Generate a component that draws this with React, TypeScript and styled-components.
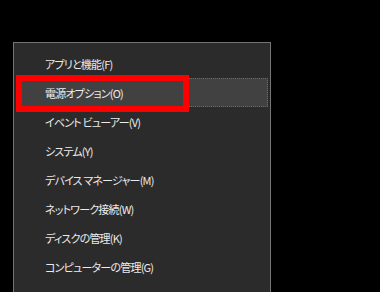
import styled, { createGlobalStyle } from 'styled-components';

const GlobalStyle = createGlobalStyle`
  html, body {
    margin: 0;
    padding: 0;
    background: #000000;
    width: 380px;
    height: 292px;
    overflow: hidden;
  }
`;

const Screen = styled.div`
  width: 380px;
  height: 292px;
  padding: 42px 0 0 13px;
  box-sizing: border-box;
  overflow: hidden;
`;

const Menu = styled.ul`
  list-style: none;
  margin: 0;
  width: 258px;
  box-sizing: border-box;
  padding: 6px 2px;
  background: #2b2b2b;
  border: 1px solid #747474;
  font-family: 'Noto Sans CJK JP', 'Noto Sans', sans-serif;
  font-feature-settings: 'palt';
  font-size: 11px;
  letter-spacing: -0.8px;
  color: #ececec;
`;

const Item = styled.li<{ $active?: boolean }>`
  position: relative;
  height: 29px;
  display: flex;
  align-items: center;
  padding-left: 29px;
  background: ${(p) => (p.$active ? '#414141' : 'transparent')};
  outline: ${(p) => (p.$active ? '1px dotted #6a6a6a' : 'none')};
  outline-offset: -1px;
  white-space: nowrap;
`;

const Highlight = styled.span`
  position: absolute;
  left: 0;
  top: -3px;
  width: 173px;
  height: 37px;
  box-sizing: border-box;
  border: 6px solid #ff0000;
  pointer-events: none;
`;

const items = [
  'アプリと機能(F)',
  '電源オプション(O)',
  'イベント ビューアー(V)',
  'システム(Y)',
  'デバイス マネージャー(M)',
  'ネットワーク接続(W)',
  'ディスクの管理(K)',
  'コンピューターの管理(G)',
  'Windows PowerShell(I)',
];

const App = () => (
  <>
    <GlobalStyle />
    <Screen>
      <Menu>
        {items.map((label, i) => (
          <Item key={label} $active={i === 1}>
            {label}
            {i === 1 && <Highlight />}
          </Item>
        ))}
      </Menu>
    </Screen>
  </>
);

export default App;
